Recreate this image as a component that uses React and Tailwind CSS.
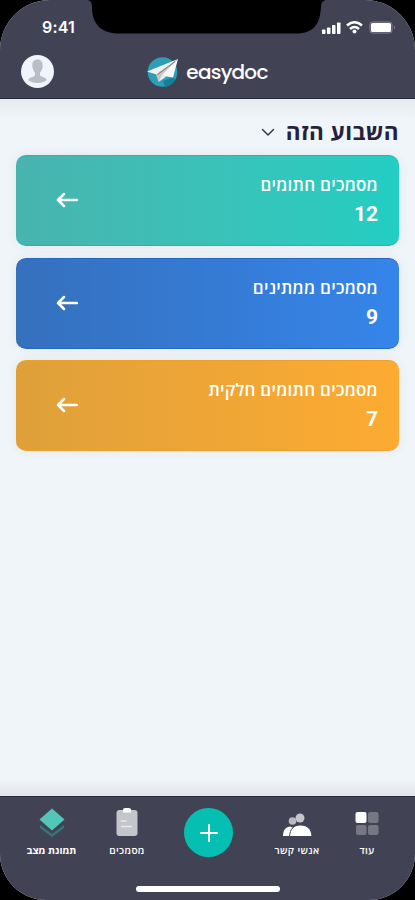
import React from 'react';
import { clsx } from 'clsx';

const cards = [
  { title: 'מסמכים חתומים', count: 12, color: 'from-[#48b4ae] to-[#22cec2]', edge: 'border-[#20b8ac]' },
  { title: 'מסמכים ממתינים', count: 9, color: 'from-[#3570bd] to-[#3585ea]', edge: 'border-[#2468c6]' },
  { title: 'מסמכים חתומים חלקית', count: 7, color: 'from-[#dfa03a] to-[#fdab31]', edge: 'border-[#eda02c]' },
];

const App = () => (
  <div className="h-[900px] w-[415px] overflow-hidden bg-black font-['Open_Sans','Liberation_Sans',sans-serif]">
    <div className="relative flex h-full flex-col overflow-hidden rounded-t-[50px] rounded-b-[46px] bg-[#f0f5f9]">
      <Notch />
      <Header />
      <main dir="rtl" className="flex-1 bg-linear-to-b from-[#e6ebef] via-[#f0f5f9] via-[3%] to-[#f0f5f9] px-4 pt-[18px]">
        <div className="flex h-[30px] items-center gap-[11px]">
          <h1 className="text-[22.5px] leading-[30px] font-bold tracking-[0.4px] text-[#24213c]">השבוע הזה</h1>
          <ChevronIcon />
        </div>
        <div className="mt-[8px] flex flex-col gap-[11.5px]">
          {cards.map((card) => (
            <SummaryCard key={card.title} {...card} />
          ))}
        </div>
      </main>
      <div className="h-4 bg-linear-to-b from-[#f0f5f9] to-[#e1e5e9]" />
      <TabBar />
    </div>
  </div>
);

// Black cutout at the top of the screen
const Notch = () => (
  <svg className="absolute top-0 left-[88px]" width="240" height="34" viewBox="0 0 240 34">
    <path d="M0 0 Q4 1 4 7 C4 24 13 33.500 31 33.500 H208 C226 33.500 232 24 233 7 Q233 1 238 0Z" fill="#000" />
  </svg>
);

const Header = () => (
  <header className="h-[99px] border-b border-[#29273a] bg-[#424255]">
    <div className="flex h-[46px] items-end justify-between pr-[18px] pb-[9px] pl-[42px]">
      <span className="font-['Inter',sans-serif] text-[16px] leading-5 font-semibold tracking-[0.2px] text-white">9:41</span>
      <StatusIcons />
    </div>
    <div className="grid grid-cols-[1fr_auto_1fr] items-center px-[21px]">
      <Avatar />
      <div className="flex h-[51px] items-center gap-[7px]">
        <Logo />
        <span className="font-['Poppins','Inter',sans-serif] text-[20px] leading-7 font-medium tracking-[-0.75px] text-white">easydoc</span>
      </div>
    </div>
  </header>
);

const StatusIcons = () => (
  <svg width="76" height="14" viewBox="0 0 76 14" className="mb-[2px]">
    <g fill="#fff">
      <rect x="1" y="8.500" width="3.500" height="4.500" rx=".8" />
      <rect x="6" y="6.500" width="3.500" height="6.500" rx=".8" />
      <rect x="11" y="4" width="3.500" height="9" rx=".8" />
      <rect x="16" y="1.500" width="3.500" height="11.500" rx=".8" />
      <circle cx="33.500" cy="10.500" r="2" />
      <rect x="50" y="2" width="20" height="9" rx="1.500" />
    </g>
    <path d="M26 4.500 Q33.500 -2 41 4.500 M29 8 Q33.500 4 38 8" fill="none" stroke="#fff" strokeWidth="2.500" />
    <rect x="49" y="1" width="22" height="11" rx="2.500" fill="none" stroke="#85858f" />
    <path d="M73 4.500 Q75 6.500 73 8.500Z" fill="#85858f" />
  </svg>
);

const Avatar = () => (
  <svg width="33" height="33" viewBox="0 0 33 33">
    <circle cx="16.500" cy="16.500" r="16.500" fill="#f0f5fb" />
    <path
      d="M16.500 4.500c-3.600 0-5.300 2.500-5.100 6 0 1.100-.2 1.800.4 2.800.4 2.200 1.400 3.600 2.200 4.500v2.500c-1.500 2-5.500 1.700-6.900 4.800 2.300 1.900 5.700 2.900 9.400 2.900s7.100-1 9.400-2.900c-1.400-3.100-5.400-2.800-6.900-4.800v-2.500c.8-.9 1.800-2.300 2.200-4.500.6-1 .4-1.700.4-2.800.2-3.500-1.500-6-5.100-6Z"
      fill="#b8bdc7"
    />
  </svg>
);

const Logo = () => (
  <svg width="32" height="32" viewBox="0 0 32 32">
    <circle cx="15.500" cy="16" r="14.800" fill="#2d9fb4" />
    <path d="m16 25 10-3.500 2.500 2.500Q24 30 18 31Z" fill="#167f96" />
    <path d="M0 15.500 31 3 11 19Z" fill="#f1f1f1" />
    <path d="M31 3 9 18.500 11.500 26 15 20.500Z" fill="#c6c6c7" />
    <path d="M31 3 14.500 19.500l11.500 2Z" fill="#fafafa" />
    <path d="m11.500 26 3-6.500 5 1Z" fill="#ececec" />
    <path d="M28 5.500 10.500 18.500" stroke="#77777b" strokeWidth="1" />
  </svg>
);

const ChevronIcon = () => (
  <svg width="14" height="9" viewBox="0 0 14 9">
    <path d="m1.500 1.500 5.500 5.500 5.500-5.500" fill="none" stroke="#39384a" strokeWidth="1.500" strokeLinecap="round" strokeLinejoin="round" />
  </svg>
);

const SummaryCard = ({ title, count, color, edge }) => (
  <section
    className={clsx(
      'flex h-[91px] items-center justify-between rounded-[10px] border-y bg-linear-to-r pr-[21px] pl-[40px] text-white shadow-[0_0_12px_rgba(50,60,80,0.07)]',
      color,
      edge
    )}
  >
    <div>
      <h2 className="text-[17px] leading-[25px] font-semibold tracking-[0.24px]">{title}</h2>
      <p className="mt-[2px] font-['Roboto',sans-serif] text-[21px] leading-[30px] font-bold">{count}</p>
    </div>
    <svg width="22" height="16" viewBox="0 0 22 16" className="mb-px">
      <path d="M21 8H2M8 2 2 8l6 6" fill="none" stroke="#fff" strokeWidth="2.500" strokeLinecap="round" strokeLinejoin="round" />
    </svg>
  </section>
);

const TabBar = () => (
  <nav className="flex h-[104px] flex-col border-t border-[#292839] bg-[#424255]">
    <div className="flex h-[89px] items-start pl-[18px] text-white">
      <Tab label="תמונת מצב" className="w-[67px]" labelClass="font-bold">
        <svg width="26" height="30" viewBox="0 0 26 30">
          <path d="m1 17 12 9 12-9v3l-12 9L1 20Z" fill="#397478" />
          <path d="M13 0.500 25.500 11.500 13 22.500 .5 11.500Z" fill="#54c5b9" />
        </svg>
      </Tab>
      <Tab label="מסמכים" className="ml-[18px] w-[48px]" labelClass="font-semibold tracking-[0.4px]">
        <svg width="22" height="30" viewBox="0 0 22 30">
          <rect x=".5" y="2" width="21" height="26" rx="3" fill="#c5c5cc" />
          <path d="M7 1.500Q7 0 9 0h4q2 0 2 1.500v3H7Z" fill="#fff" />
          <path d="M5.500 13H10M5.500 18.500h10" stroke="#e8e8ed" strokeWidth="1.500" strokeLinecap="round" />
        </svg>
      </Tab>
      <button className="mt-[11px] ml-[33px] flex h-[49px] w-[49px] items-center justify-center rounded-full bg-[#05bfb2]">
        <svg width="18" height="18" viewBox="0 0 18 18">
          <path d="M9 1v16M1 9h16" stroke="#fff" strokeWidth="2" strokeLinecap="round" />
        </svg>
      </button>
      <Tab label="אנשי קשר" className="ml-[38px] w-[52px]" labelClass="font-semibold tracking-[0.4px]">
        <svg width="30" height="30" viewBox="0 0 30 30">
          <circle cx="10.500" cy="13" r="3.800" fill="#b9b9c1" />
          <circle cx="18" cy="10" r="4.500" fill="#c5c5cc" />
          <path d="M1 28c0-6 3-9.500 7.500-9.500L11 20 8 28Z" fill="#fff" />
          <path d="M7.500 28.500C8 21 11.500 17 18.500 17S29.500 21 30 28.500Z" fill="#fff" stroke="#424255" />
        </svg>
      </Tab>
      <Tab label="עוד" className="ml-[27px] w-[34px]" labelClass="font-semibold tracking-[0.2px]">
        <svg width="24" height="30" viewBox="0 0 24 30">
          <rect x=".5" y="4" width="11" height="11" rx="2" fill="#fff" />
          <rect x="13" y="4" width="10.500" height="11" rx="2" fill="#777783" />
          <rect x="1" y="17" width="10.500" height="10" rx="2" fill="#777783" />
          <rect x="13" y="17" width="10.500" height="10" rx="2" fill="#777783" />
        </svg>
      </Tab>
    </div>
    <div className="ml-[136px] h-[6px] w-[144px] shrink-0 rounded-full bg-white" />
  </nav>
);

const Tab = ({ label, className, labelClass, children }) => (
  <div className={clsx('flex shrink-0 flex-col items-center pt-[11px]', className)}>
    {children}
    <span dir="rtl" className={clsx('mt-[4px] text-[10px] leading-4 whitespace-nowrap', labelClass)}>{label}</span>
  </div>
);

export default App;
